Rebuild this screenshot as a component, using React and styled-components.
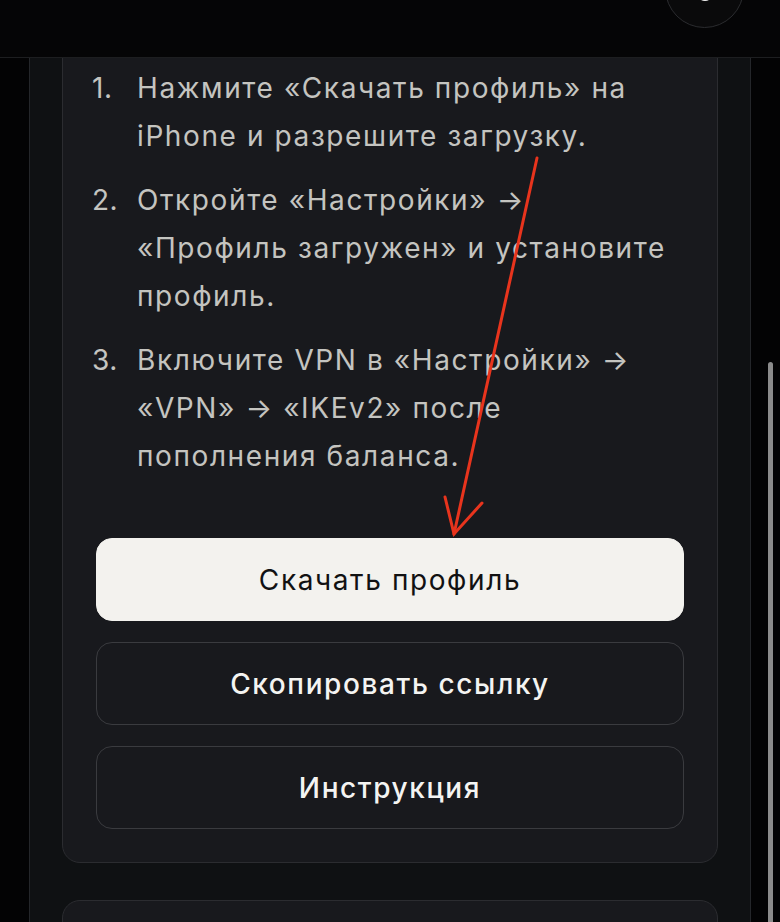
import React from 'react'
import styled, { createGlobalStyle } from 'styled-components'

const GlobalStyle = createGlobalStyle`
  *, *::before, *::after {
    box-sizing: border-box;
  }
  html, body {
    margin: 0;
    padding: 0;
    background: #030304;
    font-family: Inter, "Noto Sans", "Liberation Sans", sans-serif;
  }
  #root {
    height: 922px;
    overflow: hidden;
  }
`

const Page = styled.div`
  position: relative;
  height: 922px;
  overflow: hidden;
  background: #030304;
`

const Header = styled.header`
  position: relative;
  height: 58px;
  background: #050506;
  border-bottom: 1px solid #1d1e20;
  overflow: hidden;
`

const RoundButton = styled.div`
  position: absolute;
  right: 36px;
  top: -51px;
  width: 79px;
  height: 79px;
  border-radius: 50%;
  border: 1px solid #2b2c2f;
  background: #0a0a0b;
  display: flex;
  justify-content: center;
  align-items: flex-end;
  padding-bottom: 26px;
`

const Dot = styled.span`
  width: 16px;
  height: 8px;
  border-radius: 0 0 8px 8px;
  background: #f2f2f2;
`

const Column = styled.main`
  margin-left: 29px;
  width: 722px;
  height: 864px;
  background: #0f1113;
  border-left: 1px solid #24262a;
  border-right: 1px solid #24262a;
  padding: 0 32px;
  overflow: hidden;
`

const Card = styled.section`
  background: #18191d;
  border: 1px solid #2b2c30;
  border-radius: 18px;
  padding: ${p => (p.$cut ? '35px 33px 33px' : '30px 33px')};
  margin-top: ${p => (p.$cut ? '-30px' : '37px')};
  min-height: ${p => (p.$cut ? 'auto' : '120px')};
`

const Steps = styled.ol`
  list-style: none;
  margin: 0 -4px;
  padding: 0;
  display: flex;
  flex-direction: column;
  gap: 16px;
`

const Step = styled.li`
  display: grid;
  grid-template-columns: 45px 1fr;
  padding-right: 10px;
  font-size: 28px;
  line-height: 48px;
  letter-spacing: 1.6px;
  color: #c4c4c0;
`

const Num = styled.span`
  letter-spacing: 0.5px;
`

const Actions = styled.div`
  display: flex;
  flex-direction: column;
  gap: 21px;
  margin-top: 58px;
`

const Button = styled.button`
  height: 83px;
  border-radius: 16px;
  font-family: inherit;
  font-size: 28px;
  letter-spacing: 1.6px;
  font-weight: ${p => (p.$primary ? 400 : 500)};
  cursor: pointer;
  background: ${p => (p.$primary ? '#f3f2ee' : 'transparent')};
  color: ${p => (p.$primary ? '#111112' : '#f4f4f2')};
  border: 1px solid ${p => (p.$primary ? '#f3f2ee' : '#3a3b3f')};
`

const ScrollThumb = styled.div`
  position: absolute;
  right: 7px;
  top: 362px;
  width: 5px;
  height: 600px;
  border-radius: 3px;
  background: #8b8b8b;
`

const Annotation = styled.svg`
  position: absolute;
  left: 0;
  top: 0;
  pointer-events: none;
`

const steps = [
  'Нажмите «Скачать профиль» на iPhone и разрешите загрузку.',
  'Откройте «Настройки» → «Профиль загружен» и установите профиль.',
  'Включите VPN в «Настройки» → «VPN» → «IKEv2» после пополнения баланса.',
]

const App = () => (
  <>
    <GlobalStyle />
    <Page>
      <Header>
        <RoundButton>
          <Dot />
        </RoundButton>
      </Header>
      <Column>
        <Card $cut>
          <Steps>
            {steps.map((text, i) => (
              <Step key={i}>
                <Num>{i + 1}.</Num>
                <span>{text}</span>
              </Step>
            ))}
          </Steps>
          <Actions>
            <Button $primary>Скачать профиль</Button>
            <Button>Скопировать ссылку</Button>
            <Button>Инструкция</Button>
          </Actions>
        </Card>
        <Card />
      </Column>
      <ScrollThumb />
      <Annotation width="780" height="922" viewBox="0 0 780 922">
        <g stroke="#e8341d" strokeWidth="3" fill="none" strokeLinecap="round">
          <path d="M537 158 L454 534" />
          <path d="M445 497 L454 534 L482 503" />
        </g>
      </Annotation>
    </Page>
  </>
)

export default App
